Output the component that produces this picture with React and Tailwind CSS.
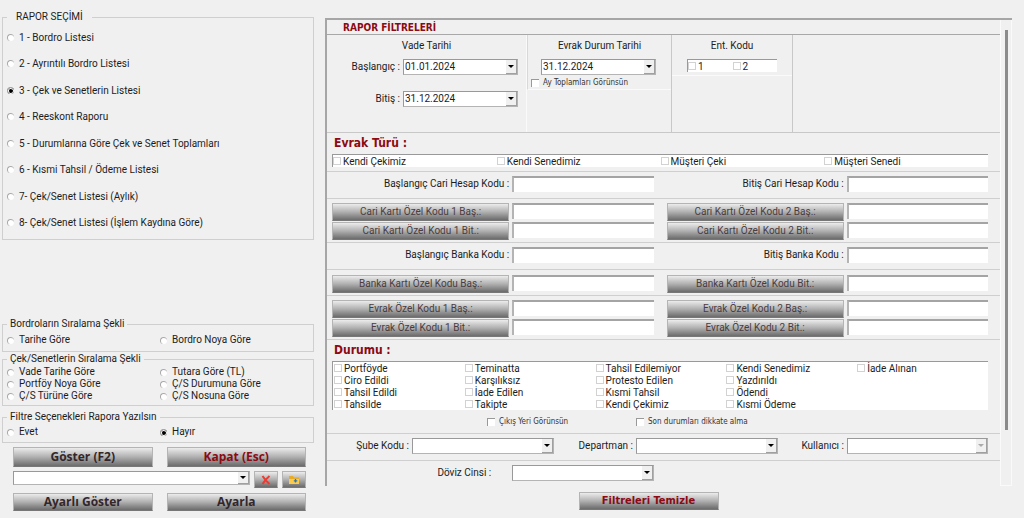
import React from 'react';
import clsx from 'clsx';

const reports = [
  '1 - Bordro Listesi',
  '2 - Ayrıntılı Bordro Listesi',
  '3 - Çek ve Senetlerin Listesi',
  '4 - Reeskont Raporu',
  '5 - Durumlarına Göre Çek ve Senet Toplamları',
  '6 - Kısmi Tahsil / Ödeme Listesi',
  '7- Çek/Senet Listesi (Aylık)',
  '8- Çek/Senet Listesi (İşlem Kaydına Göre)',
];

const docTypes = ['Kendi Çekimiz', 'Kendi Senedimiz', 'Müşteri Çeki', 'Müşteri Senedi'];

// column by column
const statuses = [
  ['Portföyde', 'Ciro Edildi', 'Tahsil Edildi', 'Tahsilde'],
  ['Teminatta', 'Karşılıksız', 'İade Edilen', 'Takipte'],
  ['Tahsil Edilemiyor', 'Protesto Edilen', 'Kısmi Tahsil', 'Kendi Çekimiz'],
  ['Kendi Senedimiz', 'Yazdırıldı', 'Ödendi', 'Kısmi Ödeme'],
  ['İade Alınan'],
];

const Radio = ({ name, label, defaultChecked }) => (
  <label className="flex items-center gap-[5px] whitespace-nowrap">
    <input
      type="radio"
      name={name}
      defaultChecked={defaultChecked}
      className="h-[7px] w-[7px] shrink-0 appearance-none rounded-full border-t border-l border-[#a8a8a8] bg-white checked:bg-black checked:shadow-[inset_0_0_0_1px_white]"
    />
    {label}
  </label>
);

const Check = ({ label }) => (
  <label className="flex h-3 items-center gap-[2px] whitespace-nowrap">
    <input type="checkbox" className="h-2 w-2 shrink-0 appearance-none border border-[#d2d2d2] bg-white checked:bg-gray-600" />
    {label}
  </label>
);

const SmallCheck = ({ label }) => (
  <label className='flex h-3 items-center gap-1 font-["DejaVu_Sans_Condensed","Noto_Sans",sans-serif] text-[8px] whitespace-nowrap text-[#333]'>
    <input type="checkbox" className="h-2 w-2 shrink-0 appearance-none border-t border-l border-[#999] bg-white checked:bg-gray-600" />
    {label}
  </label>
);

const Group = ({ title, className, legendClass, children }) => (
  <fieldset className={clsx('border border-[#cfcfcf]', className)}>
    <legend className={clsx('h-[14px] leading-[14px]', legendClass)}>{title}</legend>
    {children}
  </fieldset>
);

const Select = ({ id, label, options = [''], disabled, className }) => (
  <div className={clsx('relative h-4', className)}>
    <select
      id={id}
      aria-label={label}
      disabled={disabled}
      className="block h-full w-full appearance-none border border-t-[#999] border-r-[#b4b4b4] border-b-[#b4b4b4] border-l-[#999] bg-white pl-px leading-[14px]"
    >
      {options.map((o) => (
        <option key={o}>{o}</option>
      ))}
    </select>
    <span className="pointer-events-none absolute top-px right-px bottom-px flex w-[11px] items-center justify-center border-r border-b border-[#a0a0a0] bg-[#f0f0f0]">
      <svg viewBox="0 0 6 3" className={clsx('h-[3px] w-[6px]', disabled ? 'fill-[#aaa]' : 'fill-black')}>
        <path d="M0 0h6L3 3z" />
      </svg>
    </span>
  </div>
);

const TextBox = ({ id, label }) => (
  <input
    id={id}
    aria-label={label}
    type="text"
    className="block h-4 w-full min-w-0 border-t-2 border-l-2 border-t-[#a4a4a4] border-l-[#b4b4b4] bg-white px-1"
  />
);

const Button = ({ className, children, ...props }) => (
  <button
    type="button"
    {...props}
    className={clsx(
      'flex items-center justify-center border border-[#b4b4b4] border-b-[#777] bg-linear-to-b from-[#ececec] via-[#b0b0b0] to-[#6c6c6c] whitespace-nowrap',
      className
    )}
  >
    {children}
  </button>
);

const half = 'grid grid-cols-[177fr_141fr] gap-x-[3px]';

const CodeButton = ({ children }) => (
  <div className={half}>
    <Button className="h-[18px] font-[family-name:Roboto,sans-serif] text-[10px] leading-4 text-[#4a3c40]">{children}</Button>
    <TextBox label={children} />
  </div>
);

const CodeLabel = ({ id, children }) => (
  <div className={half}>
    <label htmlFor={id} className="text-right leading-4">
      {children}
    </label>
    <TextBox id={id} />
  </div>
);

const Pair = ({ className, children }) => (
  <div className={clsx('grid grid-cols-2 gap-x-[13px] gap-y-px border-b border-[#cfcfcf] pr-3 pl-[5px]', className)}>{children}</div>
);

const DateSection = () => (
  <div className="flex h-[98px] border-b border-[#c8c8c8]">
    <div className="w-[200px] border-r border-[#fafafa] pt-1">
      <div className="text-center leading-[14px]">Vade Tarihi</div>
      <div className="mt-[6px] grid grid-cols-[73px_115px] gap-x-[3px] gap-y-4 leading-4">
        <label htmlFor="start" className="text-right">Başlangıç :</label>
        <Select id="start" options={['01.01.2024']} />
        <label htmlFor="end" className="text-right">Bitiş :</label>
        <Select id="end" options={['31.12.2024']} />
      </div>
    </div>
    <div className="w-[145px] border-r border-[#c8c8c8]">
      <div className="h-[55px] border-b border-l border-b-[#fafafa] border-l-[#d8d8d8] pt-1">
        <label htmlFor="status-date" className="block text-center leading-[14px]">Evrak Durum Tarihi</label>
        <Select id="status-date" options={['31.12.2024']} className="mt-[6px] ml-[13px] w-[115px]" />
        <div className="mt-[2px] pl-[3px]">
          <SmallCheck label="Ay Toplamları Görünsün" />
        </div>
      </div>
    </div>
    <div className="w-[121px] border-r border-[#c8c8c8]">
      <div className="h-[41px] border-b border-[#fafafa] pt-1">
        <div className="text-center leading-[14px]">Ent. Kodu</div>
        <div className="mx-[15px] mt-[6px] grid grid-cols-2 border-t border-l border-[#999] bg-white">
          <Check label="1" />
          <Check label="2" />
        </div>
      </div>
    </div>
  </div>
);

const Heading = ({ children }) => (
  <h3 className='h-[21px] pl-[2px] font-["DejaVu_Sans_Condensed","Noto_Sans",sans-serif] text-[12px] leading-[21px] font-bold text-[#8b0a14]'>
    {children}
  </h3>
);

const Filters = () => (
  <section className="flex border-t-2 border-l-2 border-t-[#a6a6a6] border-l-[#a6a6a6]">
    <div className="min-w-0 flex-1 border-r border-[#fafafa]">
      <h2 className='h-[15px] border-b border-[#a8a8a8] pl-4 font-["DejaVu_Sans_Condensed","Noto_Sans",sans-serif] text-[10px] leading-[15px] font-bold text-[#8b0a14]'>
        RAPOR FİLTRELERİ
      </h2>
      <DateSection />

      <div className="h-[39px] border-b border-[#cfcfcf] pr-3 pl-[5px]">
        <Heading>Evrak Türü :</Heading>
        <div className="grid grid-cols-4 border-t border-l border-[#999] bg-white">
          {docTypes.map((t) => (
            <Check key={t} label={t} />
          ))}
        </div>
      </div>

      <Pair className="pt-1 pb-[6px]">
        <CodeLabel id="acc-start">Başlangıç Cari Hesap Kodu :</CodeLabel>
        <CodeLabel id="acc-end">Bitiş Cari Hesap Kodu :</CodeLabel>
      </Pair>
      <Pair className="pt-1 pb-[2px]">
        <CodeButton>Cari Kartı Özel Kodu 1 Baş.:</CodeButton>
        <CodeButton>Cari Kartı Özel Kodu 2 Baş.:</CodeButton>
        <CodeButton>Cari Kartı Özel Kodu 1 Bit.:</CodeButton>
        <CodeButton>Cari Kartı Özel Kodu 2 Bit.:</CodeButton>
      </Pair>
      <Pair className="pt-1 pb-[6px]">
        <CodeLabel id="bank-start">Başlangıç Banka Kodu :</CodeLabel>
        <CodeLabel id="bank-end">Bitiş Banka Kodu :</CodeLabel>
      </Pair>
      <Pair className="pt-[5px] pb-[2px]">
        <CodeButton>Banka Kartı Özel Kodu Baş.:</CodeButton>
        <CodeButton>Banka Kartı Özel Kodu Bit.:</CodeButton>
      </Pair>
      <Pair className="pt-1 pb-[2px]">
        <CodeButton>Evrak Özel Kodu 1 Baş.:</CodeButton>
        <CodeButton>Evrak Özel Kodu 2 Baş.:</CodeButton>
        <CodeButton>Evrak Özel Kodu 1 Bit.:</CodeButton>
        <CodeButton>Evrak Özel Kodu 2 Bit.:</CodeButton>
      </Pair>

      <div className="border-b border-[#cfcfcf] pr-3 pb-[5px] pl-[5px]">
        <Heading>Durumu :</Heading>
        <div className="grid grid-cols-5 border-t border-l border-[#999] bg-white pl-px">
          {statuses.map((col) => (
            <div key={col[0]}>
              {col.map((s) => (
                <Check key={s} label={s} />
              ))}
            </div>
          ))}
        </div>
        <div className="mt-[6px] flex pl-[155px]">
          <div className="w-[149px]">
            <SmallCheck label="Çıkış Yeri Görünsün" />
          </div>
          <SmallCheck label="Son durumları dikkate alma" />
        </div>
      </div>

      <div className="grid grid-cols-[82fr_142fr_76fr_142fr_63fr_141fr] gap-x-[3px] border-b border-[#cfcfcf] pt-1 pr-3 pb-[6px] leading-4">
        <label htmlFor="branch" className="text-right">Şube Kodu :</label>
        <Select id="branch" />
        <label htmlFor="department" className="text-right">Departman :</label>
        <Select id="department" />
        <label htmlFor="user" className="text-right">Kullanıcı :</label>
        <Select id="user" disabled />
      </div>
      <div className="grid grid-cols-2 gap-x-[13px] pt-1 pr-3 pb-[5px] pl-[5px] leading-4">
        <div className={half}>
          <label htmlFor="currency" className="pr-[18px] text-right">Döviz Cinsi :</label>
          <Select id="currency" />
        </div>
      </div>
    </div>
    <div className="w-[11px] border-r border-b border-[#fafafa] pt-[10px] pl-1">
      <div className="h-[400px] w-[3px] bg-[#8a8a8a]" />
    </div>
  </section>
);

const Sidebar = () => (
  <aside className="w-[312px] shrink-0">
    <Group title="RAPOR SEÇİMİ" className="h-[230px]" legendClass="ml-1 px-[9px]">
      <div className="grid h-[212px] grid-rows-8 pl-1">
        {reports.map((r, i) => (
          <Radio key={r} name="report" label={r} defaultChecked={i === 2} />
        ))}
      </div>
    </Group>

    <Group title="Bordroların Sıralama Şekli" className="mt-[77px] h-[35px]" legendClass="ml-1 px-[3px]">
      <div className="grid grid-cols-2 pt-[2px] pl-1 leading-[14px]">
        <Radio name="bordro" label="Tarihe Göre" />
        <Radio name="bordro" label="Bordro Noya Göre" />
      </div>
    </Group>

    <Group title="Çek/Senetlerin Sıralama Şekli" className="h-[54px]" legendClass="ml-1 px-[3px]">
      <div className="grid grid-cols-2 pl-1 leading-[12px]">
        <Radio name="sort" label="Vade Tarihe Göre" />
        <Radio name="sort" label="Tutara Göre (TL)" />
        <Radio name="sort" label="Portföy Noya Göre" />
        <Radio name="sort" label="Ç/S Durumuna Göre" />
        <Radio name="sort" label="Ç/S Türüne Göre" />
        <Radio name="sort" label="Ç/S Nosuna Göre" />
      </div>
    </Group>

    <Group title="Filtre Seçenekleri Rapora Yazılsın" className="mt-1 h-[33px]" legendClass="ml-1 px-[3px]">
      <div className="grid grid-cols-2 pt-px pl-1 leading-[14px]">
        <Radio name="print" label="Evet" />
        <Radio name="print" label="Hayır" defaultChecked />
      </div>
    </Group>

    <div className="mt-1 grid grid-cols-2 gap-x-[14px] pr-2 pl-[11px] font-[family-name:Open_Sans,sans-serif] text-[12px] font-bold">
      <Button className="h-5 text-[#33262b]">Göster (F2)</Button>
      <Button className="h-5 text-[#8b0a14]">Kapat (Esc)</Button>
    </div>
    <div className="mt-1 flex gap-1 pr-2 pl-[11px]">
      <Select label="Kayıtlı ayar" className="h-[14px] flex-1" />
      <Button aria-label="Sil" className="h-[17px] w-6">
        <svg viewBox="0 0 10 10" className="h-[10px] w-[10px] fill-none stroke-[#ee3a32] stroke-2">
          <path d="M1.5 1c2 3 4 5.500 7 8M8.500 1C6 3 3.500 6 1.500 9" />
        </svg>
      </Button>
      <Button aria-label="Klasör" className="h-[17px] w-6">
        <svg viewBox="0 0 10 8" className="h-2 w-[10px]">
          <path d="M0 0h4l1 1.500h5V8H0z" fill="#e8ac24" />
          <path d="M0 3h10v5H0z" fill="#fccb4c" />
          <path d="M6.500 3v3.500M4.800 4.800h3.500" stroke="#2878b8" strokeWidth="1.300" />
        </svg>
      </Button>
    </div>
    <div className="mt-[5px] grid grid-cols-2 gap-x-[14px] pr-2 pl-[11px] font-[family-name:Open_Sans,sans-serif] text-[12px] leading-4 font-bold">
      <Button className="h-[18px] text-[#33262b]">Ayarlı Göster</Button>
      <Button className="h-[18px] text-[#33262b]">Ayarla</Button>
    </div>
  </aside>
);

export default function App() {
  return (
    <div className="flex min-h-screen gap-[11px] bg-[#f0f0f0] pt-[10px] pr-3 pl-[2px] font-[family-name:Roboto,sans-serif] text-[10px] text-[#1c1c1c]">
      <Sidebar />
      <main className="min-w-0 flex-1 pt-2">
        <Filters />
        <div className="flex justify-center pt-[6px] pr-10">
          <Button className='h-[18px] w-[140px] font-["DejaVu_Sans_Condensed","Noto_Sans",sans-serif] text-[11px] leading-4 font-bold text-[#8b0a14]'>
            Filtreleri Temizle
          </Button>
        </div>
      </main>
    </div>
  );
}
